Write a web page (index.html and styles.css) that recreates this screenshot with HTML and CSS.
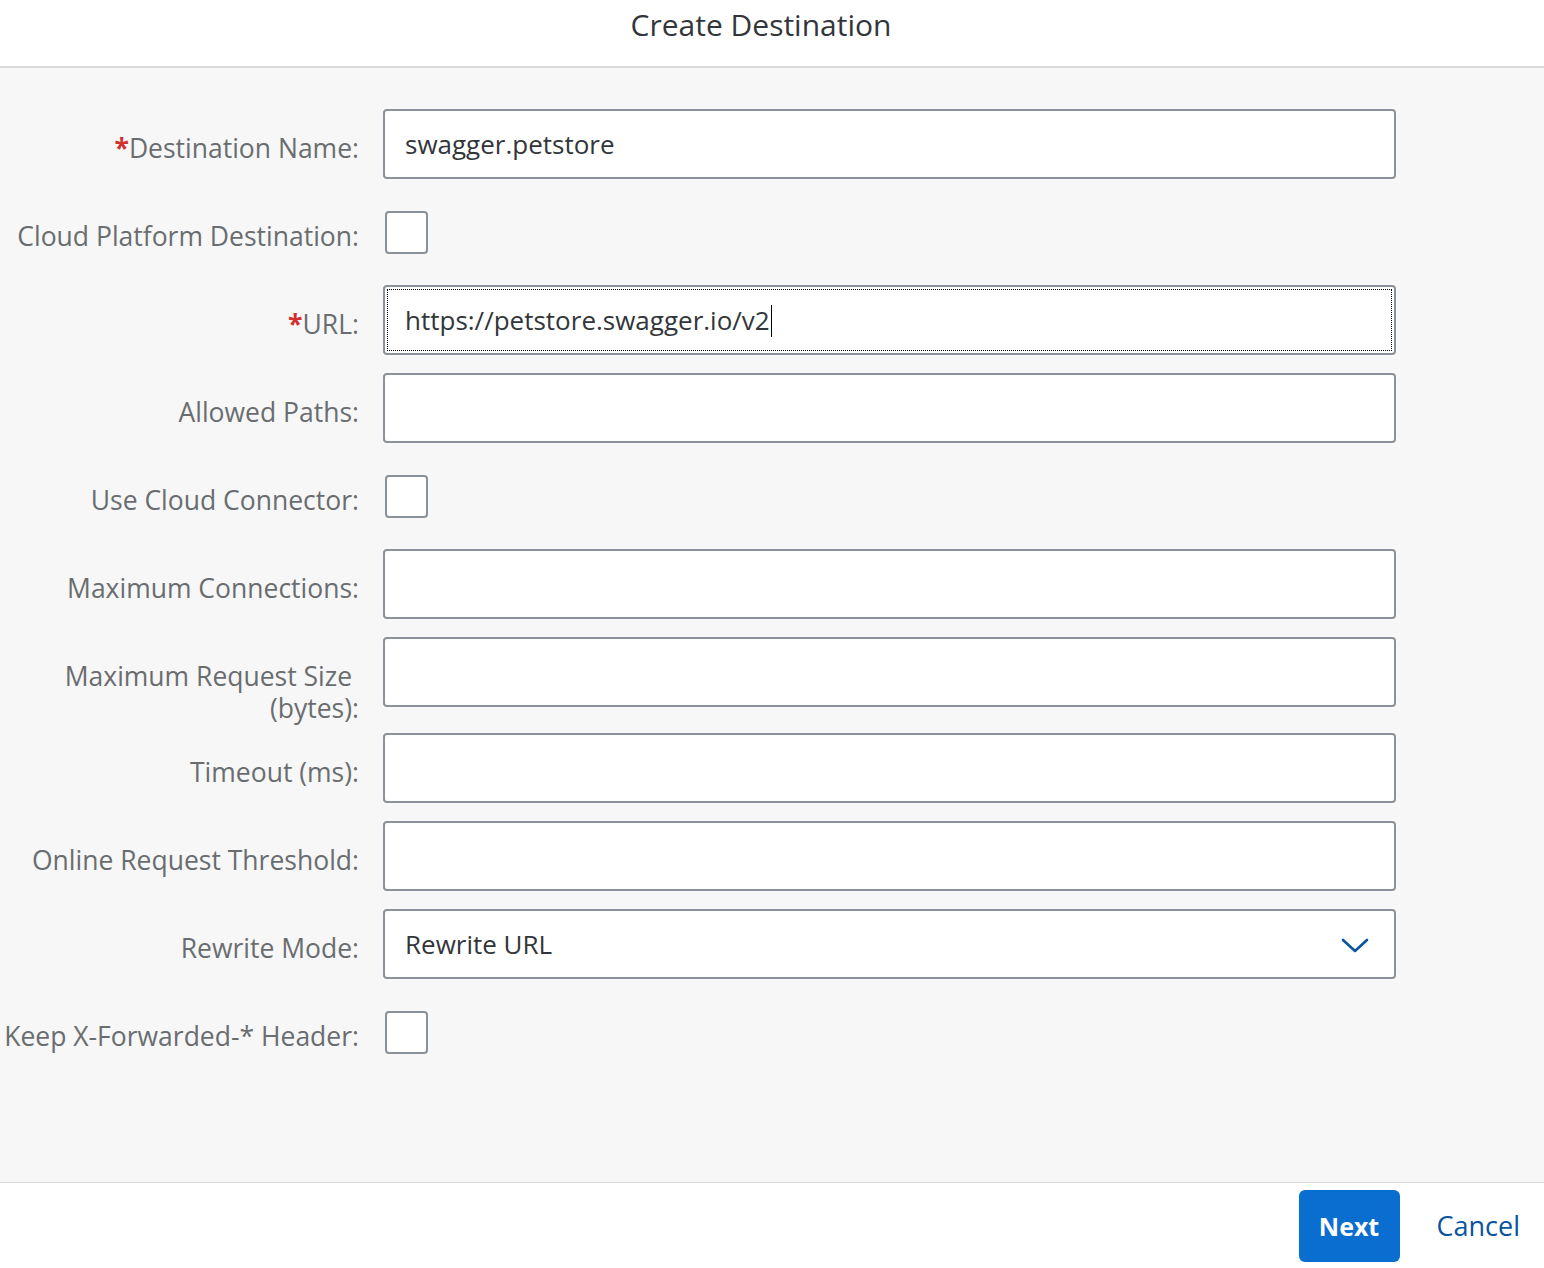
FILE: index.html
```html
<!DOCTYPE html>
<html>
<head>
<meta charset="utf-8">
<link rel="stylesheet" href="styles.css">
</head>
<body>
<div class="dialog">
  <header class="header"><h1 class="title">Create Destination</h1></header>
  <main class="content">
    <form class="form">
      <div class="row">
        <label class="label"><span class="req">*</span>Destination Name:</label>
        <div class="control"><div class="input">swagger.petstore</div></div>
      </div>
      <div class="row">
        <label class="label">Cloud Platform Destination:</label>
        <div class="control"><div class="checkbox"></div></div>
      </div>
      <div class="row">
        <label class="label"><span class="req">*</span>URL:</label>
        <div class="control"><div class="input focused"><span class="focus-ring"></span>https://petstore.swagger.io/v2<span class="caret"></span></div></div>
      </div>
      <div class="row">
        <label class="label">Allowed Paths:</label>
        <div class="control"><div class="input"></div></div>
      </div>
      <div class="row">
        <label class="label">Use Cloud Connector:</label>
        <div class="control"><div class="checkbox"></div></div>
      </div>
      <div class="row">
        <label class="label">Maximum Connections:</label>
        <div class="control"><div class="input"></div></div>
      </div>
      <div class="row">
        <label class="label">Maximum Request Size&nbsp; (bytes):</label>
        <div class="control"><div class="input"></div></div>
      </div>
      <div class="row">
        <label class="label">Timeout (ms):</label>
        <div class="control"><div class="input"></div></div>
      </div>
      <div class="row">
        <label class="label">Online Request Threshold:</label>
        <div class="control"><div class="input"></div></div>
      </div>
      <div class="row">
        <label class="label">Rewrite Mode:</label>
        <div class="control">
          <div class="input select">Rewrite URL
            <svg class="chevron" width="28" height="16" viewBox="0 0 28 16"><path d="M2 2 L14 13 L26 2" fill="none" stroke="#0854a0" stroke-width="2.6" stroke-linecap="round" stroke-linejoin="round"/></svg>
          </div>
        </div>
      </div>
      <div class="row">
        <label class="label">Keep X-Forwarded-* Header:</label>
        <div class="control"><div class="checkbox"></div></div>
      </div>
    </form>
  </main>
  <footer class="footer">
    <button class="btn-next" type="button">Next</button>
    <button class="btn-cancel" type="button">Cancel</button>
  </footer>
</div>
</body>
</html>
```
FILE: styles.css
```css
* { box-sizing: border-box; }
html, body { margin: 0; padding: 0; }
body {
  font-family: "Open Sans", "Noto Sans", "Liberation Sans", sans-serif;
  background: #ffffff;
  color: #32363a;
}
.dialog {
  width: 1544px;
  height: 1268px;
  display: flex;
  flex-direction: column;
}
.header {
  height: 68px;
  background: #ffffff;
  border-bottom: 2px solid #d9d9d9;
  display: flex;
  justify-content: center;
  padding-right: 22px;
}
.title {
  margin: 0;
  font-size: 30px;
  font-weight: 400;
  line-height: 50px;
  color: #32363a;
}
.content {
  flex: 1;
  background: #f7f7f7;
  padding-top: 41px;
  border-bottom: 1px solid #d9d9d9;
}
.form {
  display: flex;
  flex-direction: column;
}
.row {
  display: flex;
  align-items: flex-start;
}
.label {
  width: 359px;
  text-align: right;
  font-size: 26.5px;
  line-height: 32px;
  padding-top: 23px;
  padding-bottom: 9px;
  color: #6a6d70;
}
.req { color: #d0312d; font-weight: 700; }
.control {
  margin-left: 24px;
  width: 1013px;
  padding-bottom: 18px;
}
.input {
  position: relative;
  height: 70px;
  background: #ffffff;
  border: 2px solid #89919a;
  border-radius: 4px;
  padding: 0 20px;
  font-size: 26px;
  line-height: 66px;
  color: #32363a;
}
.focus-ring {
  position: absolute;
  left: 2px; top: 2px; right: 2px; bottom: 2px;
  border: 1px dotted #000000;
}
.caret {
  display: inline-block;
  width: 1px;
  height: 32px;
  background: #000;
  vertical-align: middle;
  margin-left: 1px;
  margin-top: -4px;
}
.select {
  display: flex;
  align-items: center;
  justify-content: space-between;
  line-height: normal;
}
.chevron { margin-right: 5px; margin-top: 4px; }
.checkbox {
  margin: 14px 0 13px 2px;
  width: 43px;
  height: 43px;
  background: #ffffff;
  border: 2px solid #89919a;
  border-radius: 4px;
}
.footer {
  height: 85px;
  background: #ffffff;
  display: flex;
  align-items: center;
  justify-content: flex-end;
  padding-right: 24px;
}
.btn-next {
  width: 101px;
  height: 72px;
  background: #0a6ed1;
  color: #ffffff;
  border: none;
  border-radius: 6px;
  font-family: inherit;
  font-size: 25px;
  font-weight: 700;
  margin-right: 37px;
}
.btn-cancel {
  background: none;
  border: none;
  padding: 0;
  font-family: inherit;
  font-size: 27px;
  color: #0854a0;
}
```
